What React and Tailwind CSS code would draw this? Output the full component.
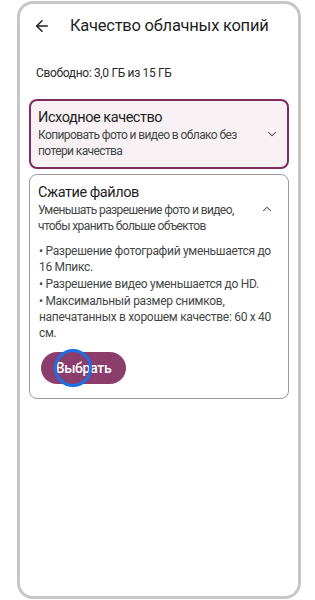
import { ArrowLeft, ChevronDown, ChevronUp } from "lucide-react";

const bullets = [
  "• Разрешение фотографий уменьшается до 16 Мпикс.",
  "• Разрешение видео уменьшается до HD.",
  "• Максимальный размер снимков, напечатанных в хорошем качестве: 60 x 40 см.",
];

export default function App() {
  return (
    <div className="w-[315px] h-[600px] bg-white font-['Roboto',sans-serif] text-[#1f1f1f]">
      <div className="ml-[17px] mt-[1px] w-[284px] h-[598px] rounded-[16px] border-[3px] border-[#c6c6c6] px-[9px]">
        <div className="flex h-[44px] items-center">
          <ArrowLeft className="ml-[4px] h-[18px] w-[18px] text-[#1f1f1f]" strokeWidth={2} />
          <div className="ml-[19px] text-[16.5px] tracking-[-0.25px]">Качество облачных копий</div>
        </div>

        <div className="mt-[16px] pl-[7px] text-[12px] tracking-[-0.35px] text-[#2b2b2b]">
          Свободно: 3,0 ГБ из 15 ГБ
        </div>

        <div className="mt-[17px] flex rounded-[8px] border-2 border-[#7d2c5c] bg-[#f7f1f3] pl-[7px] pt-[7px] pb-[8px]">
          <div className="flex-1">
            <div className="text-[14.5px] leading-[20px] tracking-[-0.45px]">Исходное качество</div>
            <div className="text-[12px] leading-[15.5px] tracking-[-0.6px] text-[#444746]">
              Копировать фото и видео в облако без потери качества
            </div>
          </div>
          <div className="flex w-[30px] items-center justify-center">
            <ChevronDown className="h-[14px] w-[14px] text-[#444746]" strokeWidth={1.75} />
          </div>
        </div>

        <div className="mt-[5px] rounded-[8px] border-[1.5px] border-[#9a9a9a] pl-[8px] pr-[8px] pt-[8px] pb-[14px]">
          <div className="flex">
            <div className="flex-1">
              <div className="text-[14.5px] leading-[20px] tracking-[-0.45px]">Сжатие файлов</div>
              <div className="text-[12px] leading-[15.5px] tracking-[-0.6px] text-[#444746]">
                Уменьшать разрешение фото и видео, чтобы хранить больше объектов
              </div>
            </div>
            <div className="flex w-[26px] items-center justify-center">
              <ChevronUp className="h-[14px] w-[14px] text-[#444746]" strokeWidth={1.75} />
            </div>
          </div>

          <div className="mt-[9px] flex flex-col gap-[1px] pl-[1px] text-[12px] leading-[16px] tracking-[-0.3px] text-[#444746]">
            {bullets.map((b) => (
              <div key={b}>{b}</div>
            ))}
          </div>

          <div className="relative mt-[11px] ml-[3px] w-[85px]">
            <button className="h-[32px] w-[85px] rounded-full bg-[#8b3d6b] text-[14px] font-medium tracking-[-0.3px] text-white">
              Выбрать
            </button>
            <span className="absolute left-[13px] top-[-3px] h-[38px] w-[38px] rounded-full border-[3px] border-[#1a6fe6]" />
          </div>
        </div>
      </div>
    </div>
  );
}
